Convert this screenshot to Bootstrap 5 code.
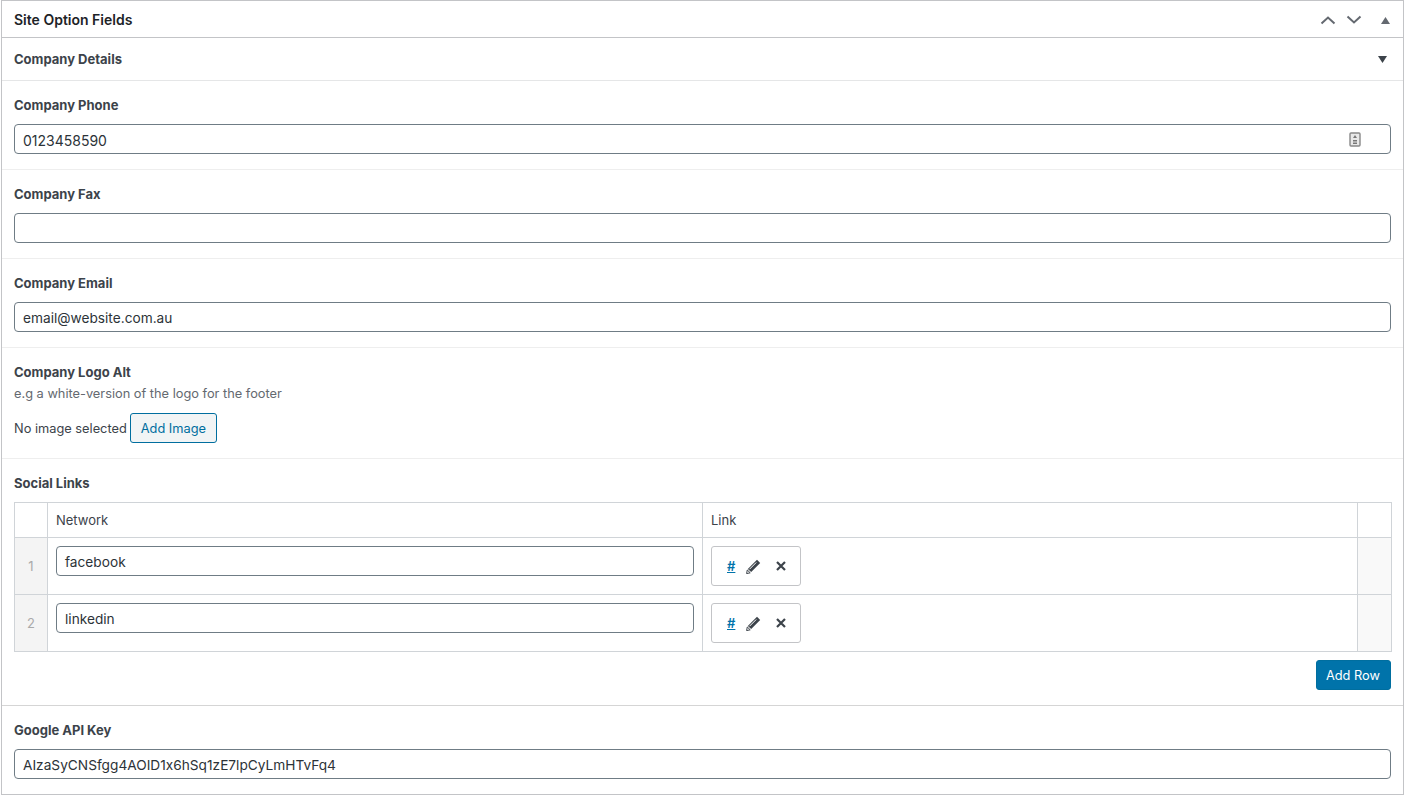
<!DOCTYPE html>
<html lang="en">
<head>
    <meta charset="UTF-8" />
    <meta name="viewport" content="width=device-width, initial-scale=1.0" />
    <title>Site Option Fields</title>
    <link href="https://cdn.jsdelivr.net/npm/bootstrap@5.3.1/dist/css/bootstrap.min.css" rel="stylesheet">
    <style>
        body { background: #fff; font-family: Inter, "Liberation Sans", sans-serif; font-feature-settings: "calt" 0; font-size: 12.8px; line-height: 1.4; color: #3c434a; overflow: hidden; }
        .postbox { width: 1403px; height: 795px; margin-left: 1px; border: 1px solid #c3c4c7; background: #fff; }
        .box-head { height: 37px; padding: 2px 13px 0 12px; border-bottom: 1px solid #c3c4c7; }
        .box-head h2 { margin: 0; font-size: 14px; font-weight: 600; color: #1d2327; }
        .group-head { height: 43px; padding: 1px 16px 0 12px; border-bottom: 1px solid #e5e6e7; font-weight: 700; font-size: 13px; }
        .field { height: 89px; padding: 15px 12px 0; border-bottom: 1px solid #eeeeee; }
        .field-logo { height: 111px; }
        .field-social { height: 247px; border-bottom-color: #d5d5d5; }
        .field-last { height: 88px; border-bottom: 0; }
        .field-label { font-weight: 700; font-size: 13px; line-height: 18px; margin-bottom: 10px; color: #3c434a; }
        .field-note { color: #646970; font-size: 12.8px; line-height: 18px; margin-top: -6px; margin-bottom: 10px; }
        .text-box { height: 30px; border: 1px solid #6f7c85; border-radius: 4px; padding: 3px 8px 0; font-size: 13.7px; color: #2c3338; background: #fff; }
        .text-digits { font-size: 14px; }
        .wp-btn { height: 30px; padding: 1px 10px 0; border: 1px solid #006e9f; border-radius: 3px; font-size: 12.8px; line-height: 28px; background: #f1f4f5; color: #006e9f; }
        .wp-btn-solid { background: #0073aa; color: #fff; padding-left: 9px; }
        .no-image { padding-top: 1px; }
        .repeater { border-collapse: collapse; width: 1377px; table-layout: fixed; }
        .repeater th, .repeater td { border: 1px solid #d0d4d8; padding: 0; vertical-align: top; }
        .repeater th { height: 35px; font-weight: 400; font-size: 13px; padding: 0 8px; vertical-align: middle; color: #3c434a; }
        .repeater td { height: 57px; padding: 8px; }
        .repeater tbody tr + tr td { border-top-color: #eee; }
        .repeater td.row-num { background: #f4f4f4; color: #aaa; text-align: center; vertical-align: middle; padding: 0; font-size: 13px; }
        .repeater td.row-end { background: #f9f9f9; padding: 0; }
        .link-chip { width: 90px; height: 40px; border: 1px solid #c3c4c7; border-radius: 3px; padding-left: 15px; gap: 11px; }
        .link-chip a { color: #0073aa; font-weight: 600; font-size: 13px; }
        .close-icon { margin-left: 3px; }
        .repeat-foot { margin-top: 8px; }
    </style>
</head>
<body>
    <div class="postbox">
        <div class="box-head d-flex align-items-center justify-content-between">
            <h2>Site Option Fields</h2>
            <div class="d-flex align-items-center" style="gap:10px">
                <svg width="16" height="10" viewBox="0 0 16 10"><path d="M1.500 8.500 8 2.500l6.500 6" fill="none" stroke="#646970" stroke-width="2"/></svg>
                <svg width="16" height="10" viewBox="0 0 16 10"><path d="M1.500 1.500 8 7.500l6.500-6" fill="none" stroke="#646970" stroke-width="2"/></svg>
                <svg style="margin-left:9px" width="9" height="7" viewBox="0 0 9 7"><path d="M4.500 0 9 7H0z" fill="#646970"/></svg>
            </div>
        </div>
        <div class="group-head d-flex align-items-center justify-content-between">
            <span>Company Details</span>
            <svg width="9" height="7" viewBox="0 0 9 7"><path d="M0 0h9L4.500 7z" fill="#3c434a"/></svg>
        </div>
        <div class="field">
            <div class="field-label">Company Phone</div>
            <div class="text-box d-flex align-items-center justify-content-between">
                <span class="text-digits">0123458590</span>
                <svg style="margin-right:21px;margin-top:-3px" width="12" height="15" viewBox="0 0 12 15"><rect x="1" y="1" width="10" height="13" rx="1" fill="#e8e8e8" stroke="#888" stroke-width="1.400"/><path d="M6 3 8 6H4z" fill="#777"/><rect x="4" y="8" width="4" height="1.500" fill="#777"/><rect x="4" y="10.500" width="4" height="1.500" fill="#777"/></svg>
            </div>
        </div>
        <div class="field">
            <div class="field-label">Company Fax</div>
            <div class="text-box"></div>
        </div>
        <div class="field">
            <div class="field-label">Company Email</div>
            <div class="text-box d-flex align-items-center">email@website.com.au</div>
        </div>
        <div class="field field-logo">
            <div class="field-label">Company Logo Alt</div>
            <div class="field-note">e.g a white-version of the logo for the footer</div>
            <div class="d-flex align-items-center" style="gap:3px">
                <span class="no-image">No image selected</span>
                <span class="wp-btn">Add Image</span>
            </div>
        </div>
        <div class="field field-social">
            <div class="field-label">Social Links</div>
            <table class="repeater">
                <colgroup><col style="width:33px"><col style="width:655px"><col style="width:655px"><col style="width:34px"></colgroup>
                <thead><tr><th></th><th>Network</th><th>Link</th><th></th></tr></thead>
                <tbody>
                    <tr>
                        <td class="row-num">1</td>
                        <td><div class="text-box d-flex align-items-center">facebook</div></td>
                        <td><div class="link-chip d-flex align-items-center"><a href="#">#</a>
                            <svg width="15" height="15" viewBox="0 0 15 15"><path d="M11 .8 14.200 4 5.200 13 1.800 10z" fill="#3c434a"/><path d="M1.300 11 4.200 13.800 .6 14.600z" fill="none" stroke="#3c434a"/><path d="M10.200 3.500 3.500 10.200" stroke="#fff"/></svg>
                            <svg class="close-icon" width="12" height="12" viewBox="0 0 12 12"><path d="M2 2l8 8M10 2l-8 8" stroke="#3c434a" stroke-width="2.200"/></svg>
                        </div></td>
                        <td class="row-end"></td>
                    </tr>
                    <tr>
                        <td class="row-num">2</td>
                        <td><div class="text-box d-flex align-items-center">linkedin</div></td>
                        <td><div class="link-chip d-flex align-items-center"><a href="#">#</a>
                            <svg width="15" height="15" viewBox="0 0 15 15"><path d="M11 .8 14.200 4 5.200 13 1.800 10z" fill="#3c434a"/><path d="M1.300 11 4.200 13.800 .6 14.600z" fill="none" stroke="#3c434a"/><path d="M10.200 3.500 3.500 10.200" stroke="#fff"/></svg>
                            <svg class="close-icon" width="12" height="12" viewBox="0 0 12 12"><path d="M2 2l8 8M10 2l-8 8" stroke="#3c434a" stroke-width="2.200"/></svg>
                        </div></td>
                        <td class="row-end"></td>
                    </tr>
                </tbody>
            </table>
            <div class="repeat-foot d-flex justify-content-end">
                <span class="wp-btn wp-btn-solid">Add Row</span>
            </div>
        </div>
        <div class="field field-last">
            <div class="field-label">Google API Key</div>
            <div class="text-box d-flex align-items-center">AIzaSyCNSfgg4AOID1x6hSq1zE7lpCyLmHTvFq4</div>
        </div>
    </div>
    <script src="https://cdn.jsdelivr.net/npm/bootstrap@5.3.1/dist/js/bootstrap.bundle.min.js"></script>
</body>
</html>
